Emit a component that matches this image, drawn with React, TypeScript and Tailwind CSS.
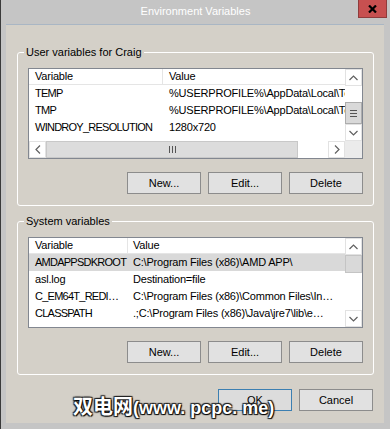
import React from "react";

type Row = { name: string; value: string; selected?: boolean };

const userVars: Row[] = [
  { name: "TEMP", value: "%USERPROFILE%\\AppData\\Local\\Temp" },
  { name: "TMP", value: "%USERPROFILE%\\AppData\\Local\\Temp" },
  { name: "WINDROY_RESOLUTION", value: "1280x720" },
];

const systemVars: Row[] = [
  { name: "AMDAPPSDKROOT", value: "C:\\Program Files (x86)\\AMD APP\\", selected: true },
  { name: "asl.log", value: "Destination=file" },
  { name: "C_EM64T_REDI…", value: "C:\\Program Files (x86)\\Common Files\\In…" },
  { name: "CLASSPATH", value: ".;C:\\Program Files (x86)\\Java\\jre7\\lib\\e…" },
];

function Arrow({ dir }: { dir: "up" | "down" | "left" | "right" }) {
  if (dir === "up" || dir === "down") {
    return (
      <svg width="9" height="6" viewBox="0 0 9 6" fill="none">
        <path
          d={dir === "up" ? "M0.5 5 L4.5 1 L8.5 5" : "M0.5 1 L4.5 5 L8.5 1"}
          stroke="#606060"
          strokeWidth="1.2"
        />
      </svg>
    );
  }
  return (
    <svg width="6" height="9" viewBox="0 0 6 9" fill="none">
      <path
        d={dir === "left" ? "M5 0.5 L1 4.5 L5 8.5" : "M1 0.5 L5 4.5 L1 8.5"}
        stroke="#606060"
        strokeWidth="1.2"
      />
    </svg>
  );
}

function ArrowBox({ dir }: { dir: "up" | "down" | "left" | "right" }) {
  return (
    <div className="w-[17px] h-[17px] shrink-0 bg-white border border-[#e2e2e2] flex items-center justify-center">
      <Arrow dir={dir} />
    </div>
  );
}

function VScroll({ gap, thumb }: { gap: number; thumb: number }) {
  return (
    <div className="w-[17px] shrink-0 flex flex-col bg-white">
      <ArrowBox dir="up" />
      <div className="flex-1">
        {gap === 16 ? <div className="h-[16px]" /> : null}
        <div
          className={
            thumb === 22
              ? "h-[22px] bg-[#d9d9d9] border border-[#adadad] flex flex-col items-center justify-center gap-[2px]"
              : "h-[18px] bg-[#d9d9d9] border border-[#c4c4c4]"
          }
        >
          {thumb === 22 && (
            <>
              <div className="w-[7px] h-px bg-[#555]" />
              <div className="w-[7px] h-px bg-[#555]" />
              <div className="w-[7px] h-px bg-[#555]" />
            </>
          )}
        </div>
      </div>
      <ArrowBox dir="down" />
    </div>
  );
}

function HScroll() {
  return (
    <div className="h-[17px] flex">
      <div className="flex-1 flex bg-white">
        <ArrowBox dir="left" />
        <div className="w-[252px] bg-[#dcdcdc] border border-[#c8c8c8] flex items-center justify-center gap-[2px]">
          <div className="w-px h-[7px] bg-[#555]" />
          <div className="w-px h-[7px] bg-[#555]" />
          <div className="w-px h-[7px] bg-[#555]" />
        </div>
        <div className="flex-1" />
        <ArrowBox dir="right" />
      </div>
      <div className="w-[17px] bg-[#ebebeb]" />
    </div>
  );
}

function ListView({
  rows,
  colWidth,
  valuePad,
  user,
}: {
  rows: Row[];
  colWidth: string;
  valuePad: string;
  user?: boolean;
}) {
  return (
    <div className="h-[91px] border border-[#828790] bg-white flex flex-col tracking-[-0.2px]">
      <div className={user ? "h-[72px] flex" : "h-[89px] flex"}>
        <div className="flex-1 overflow-hidden">
          <div className="h-[16px] flex border-b border-[#e5e5e5]">
            <div className={`${colWidth} shrink-0 border-r border-[#e5e5e5] pl-[6px] flex items-center`}>
              Variable
            </div>
            <div className={`${valuePad} flex items-center`}>Value</div>
          </div>
          {rows.map((r) => {
            const caps = r.name === r.name.toUpperCase();
            return (
              <div
                key={r.name}
                className={r.selected ? "h-[17px] flex bg-[#d9d9d9]" : "h-[17px] flex"}
              >
                <div
                  className={`${colWidth} shrink-0 pl-[6px] flex items-center whitespace-nowrap overflow-hidden ${
                    caps ? "tracking-[-0.75px]" : ""
                  }`}
                >
                  {r.name}
                </div>
                <div className={`${valuePad} flex-1 flex items-center whitespace-nowrap overflow-hidden`}>
                  {r.value}
                </div>
              </div>
            );
          })}
        </div>
        {user ? <VScroll gap={16} thumb={22} /> : <VScroll gap={0} thumb={18} />}
      </div>
      {user && <HScroll />}
    </div>
  );
}

function Button({ label, primary }: { label: string; primary?: boolean }) {
  return (
    <div
      className={
        primary
          ? "w-[74px] h-[22px] bg-[#dcdcdc] border border-[#3c7fb1] flex items-center justify-center"
          : "w-[74px] h-[22px] bg-[#e1e1e1] border border-[#8c8c8c] flex items-center justify-center"
      }
    >
      {label}
    </div>
  );
}

function ButtonRow() {
  return (
    <div className="mt-[13px] flex justify-end gap-[7px]">
      <Button label="New..." />
      <Button label="Edit..." />
      <Button label="Delete" />
    </div>
  );
}

function GroupBox({ title, children, className }: { title: string; children: React.ReactNode; className: string }) {
  return (
    <fieldset className={`${className} border border-white rounded-[3px] p-0 m-0 min-w-0`}>
      <legend className="ml-[6px] px-[2px] leading-[16px] text-[11px]">{title}</legend>
      <div className="pt-[8px] px-[10px] pb-[11px]">{children}</div>
    </fieldset>
  );
}

export default function App() {
  return (
    <div className="relative w-[390px] h-[429px] bg-[#c5c5c5] border-l border-[#3a3a3a] flex flex-col font-['Liberation_Sans',Arial,sans-serif] text-[11px] text-black leading-none">
      {/* Title bar */}
      <div className="relative h-[24px] shrink-0 flex items-center justify-center">
        <span className="text-[11px] text-white pb-px">Environment Variables</span>
        <div className="absolute right-[3px] top-0 w-[29px] h-[18px] bg-[#c75050] border border-[#8f3c3c] border-t-0 flex items-center justify-center">
          <svg width="9" height="8" viewBox="0 0 9 8">
            <path d="M1 0.5 L8 7.5 M8 0.5 L1 7.5" stroke="#000" strokeWidth="2.2" />
          </svg>
        </div>
      </div>

      {/* Content */}
      <div className="ml-[5px] w-[378px] h-[399px] shrink-0 bg-[#d4d0c8] border-t border-[#a9b6c4] pl-[11px] pr-[10px] flex flex-col">
        <GroupBox title="User variables for Craig" className="mt-[19px]">
          <ListView rows={userVars} colWidth="w-[134px]" valuePad="pl-[6px]" user />
          <ButtonRow />
        </GroupBox>

        <GroupBox title="System variables" className="mt-[7px]">
          <ListView rows={systemVars} colWidth="w-[99px]" valuePad="pl-[5px]" />
          <ButtonRow />
        </GroupBox>

        <div className="mt-[14px] flex justify-end gap-[7px] pr-px">
          <Button label="OK" primary />
          <Button label="Cancel" />
        </div>
      </div>

      {/* Watermark */}
      <div className="absolute left-[72px] top-[392px] flex items-baseline font-bold leading-[28px] text-white whitespace-nowrap [text-shadow:1px_1px_1px_#000,-1px_-1px_1px_#222,1px_-1px_1px_#222,-1px_1px_1px_#222]">
        <span className="font-['Noto_Sans_CJK_SC',sans-serif] text-[20px]">双电网</span>
        <span className="font-['Liberation_Sans',Arial,sans-serif] text-[18px]">(www. pcpc. me)</span>
      </div>
    </div>
  );
}
